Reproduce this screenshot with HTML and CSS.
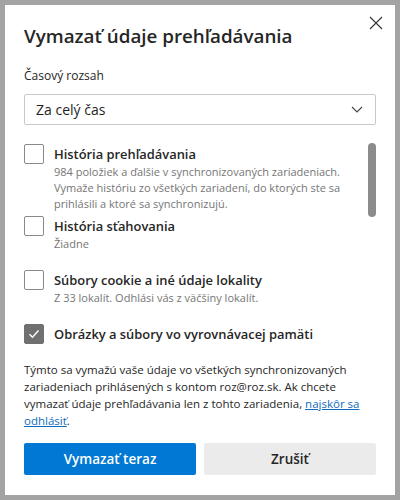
FILE: index.html
```html
<!DOCTYPE html>
<html lang="sk">
<head>
<meta charset="utf-8">
<title>Vymazať údaje prehľadávania</title>
<link rel="stylesheet" href="styles.css">
</head>
<body>
<div class="dialog">
  <button class="close" aria-label="Zavrieť">
    <svg width="14" height="14" viewBox="0 0 14 14"><path d="M1 1L13 13M13 1L1 13" stroke="#333" stroke-width="1.1" fill="none"/></svg>
  </button>
  <h1 class="title">Vymazať údaje prehľadávania</h1>
  <div class="label">Časový rozsah</div>
  <div class="select">
    <span>Za celý čas</span>
    <svg class="chev" width="12" height="7" viewBox="0 0 12 7"><path d="M1 1L6 6L11 1" stroke="#444" stroke-width="1.1" fill="none"/></svg>
  </div>
  <div class="list">
    <div class="item item-1">
      <span class="box"></span>
      <div class="text">
        <div class="name">História prehľadávania</div>
        <div class="desc">984 položiek a ďalšie v synchronizovaných zariadeniach. Vymaže históriu zo všetkých zariadení, do ktorých ste sa prihlásili a ktoré sa synchronizujú.</div>
      </div>
    </div>
    <div class="item item-2">
      <span class="box"></span>
      <div class="text">
        <div class="name">História sťahovania</div>
        <div class="desc">Žiadne</div>
      </div>
    </div>
    <div class="item item-3">
      <span class="box"></span>
      <div class="text">
        <div class="name">Súbory cookie a iné údaje lokality</div>
        <div class="desc">Z 33 lokalít. Odhlási vás z väčšiny lokalít.</div>
      </div>
    </div>
    <div class="item item-4">
      <span class="box checked">
        <svg width="12" height="10" viewBox="0 0 12 10"><path d="M1.5 5.2L4.5 8.2L10.5 1.5" stroke="#fff" stroke-width="1.4" fill="none"/></svg>
      </span>
      <div class="text">
        <div class="name">Obrázky a súbory vo vyrovnávacej pamäti</div>
      </div>
    </div>
    <div class="scrollbar"></div>
  </div>
  <p class="note">Týmto sa vymažú vaše údaje vo všetkých synchronizovaných zariadeniach prihlásených s kontom roz@roz.sk. Ak chcete vymazať údaje prehľadávania len z tohto zariadenia, <a href="#">najskôr sa odhlásiť</a>.</p>
  <div class="actions">
    <button class="btn primary">Vymazať teraz</button>
    <button class="btn secondary">Zrušiť</button>
  </div>
</div>
</body>
</html>
```

FILE: styles.css
```css
html, body {
  margin: 0;
  padding: 0;
}
body {
  background: #a3a3a3;
  padding: 5px;
  width: 400px;
  height: 500px;
  box-sizing: border-box;
  font-family: "Open Sans", "Noto Sans", sans-serif;
  color: #1f1f1f;
}
.dialog {
  position: relative;
  background: #fff;
  height: 490px;
  box-sizing: border-box;
  padding: 16px 19px 0 19px;
}
.close {
  position: absolute;
  top: 6px;
  right: 7px;
  width: 24px;
  height: 24px;
  border: 0;
  background: transparent;
  padding: 0;
  display: flex;
  align-items: center;
  justify-content: center;
}
.title {
  margin: 0;
  font-size: 18.8px;
  line-height: 30px;
  font-weight: 600;
  color: #262626;
}
.label {
  margin-top: 16px;
  font-size: 12px;
  line-height: 18px;
  color: #262626;
}
.select {
  margin-top: 9px;
  height: 31px;
  box-sizing: border-box;
  border: 1px solid #c8c8c8;
  border-radius: 2px;
  display: flex;
  align-items: center;
  justify-content: space-between;
  padding: 0 12px 0 11px;
  font-size: 14px;
  color: #1f1f1f;
}
.list {
  position: relative;
  margin-top: 19px;
}
.item {
  display: flex;
  gap: 10px;
}
.item-1 { margin-bottom: 4px; }
.item-2 { margin-bottom: 18px; }
.item-3 { margin-bottom: 18px; }
.box {
  flex: none;
  width: 20px;
  height: 20px;
  box-sizing: border-box;
  border: 1px solid #8a8a8a;
  border-radius: 2px;
  display: flex;
  align-items: center;
  justify-content: center;
}
.box.checked {
  background: #707070;
  border-color: #707070;
}
.name {
  font-size: 12.9px;
  font-weight: 600;
  line-height: 20px;
  color: #262626;
}
.desc {
  font-size: 11px;
  line-height: 16px;
  color: #767676;
  padding-right: 24px;
}
.scrollbar {
  position: absolute;
  right: 0;
  top: -1px;
  width: 8px;
  height: 74px;
  border-radius: 4px;
  background: #8c8c8c;
}
.note {
  margin: 17px 0 0 0;
  font-size: 11.5px;
  line-height: 17px;
  color: #262626;
}
.note a {
  color: #0f6cbd;
  text-decoration: underline;
  text-underline-offset: 1px;
}
.actions {
  margin-top: 14px;
  display: grid;
  grid-template-columns: 1fr 1fr;
  gap: 8px;
}
.btn {
  height: 32px;
  border: 0;
  border-radius: 2px;
  font-family: inherit;
  font-size: 13.5px;
  font-weight: 600;
}
.primary {
  background: #0078d4;
  color: #fff;
}
.secondary {
  background: #ebebeb;
  color: #262626;
}
```
